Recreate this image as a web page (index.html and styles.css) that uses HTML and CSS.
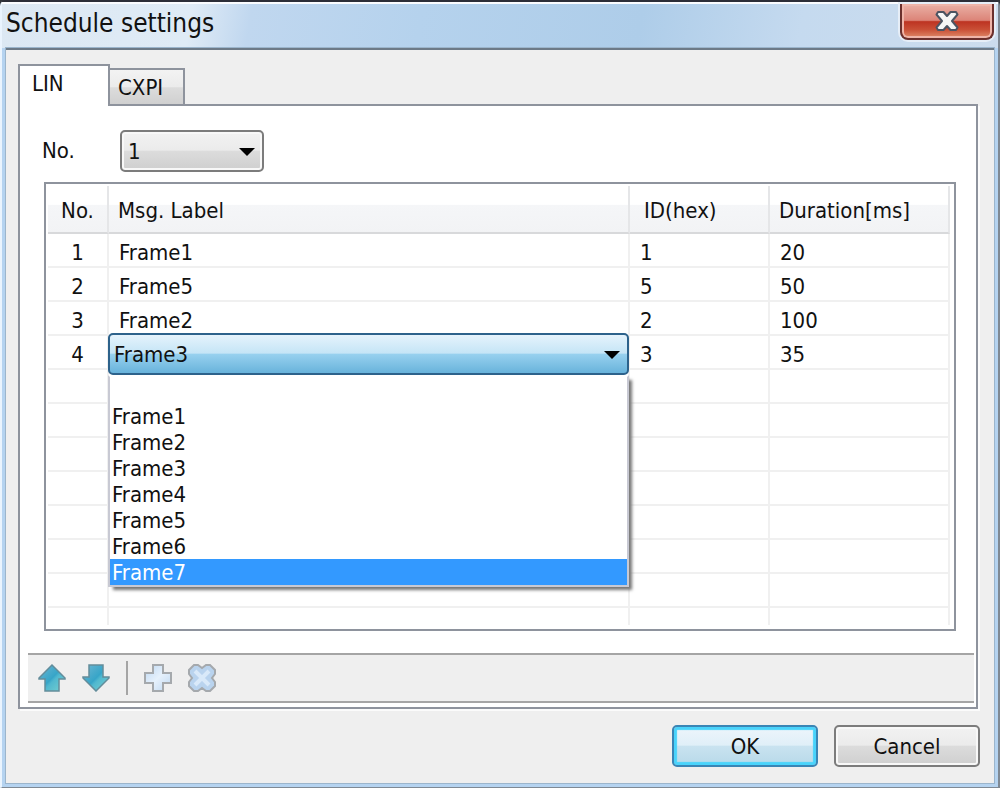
FILE: index.html
```html
<!DOCTYPE html>
<html lang="en">
<head>
<meta charset="utf-8">
<title>Schedule settings</title>
<link rel="stylesheet" href="styles.css">
</head>
<body>
<div class="window">
  <header class="titlebar">
    <h1 class="title">Schedule settings</h1>
    <button class="close" type="button" aria-label="Close">
      <svg width="24" height="22" viewBox="0 0 24 22"><path d="M3 2h5.500L12 6l3.500-4H21l1.500 2.500L17 11l5.500 6.500L21 20h-5.500L12 16l-3.500 4H3l-1.500-2.500L7 11 1.500 4.500z" fill="#f6f6f6" stroke="#4c5462" stroke-width="2" stroke-linejoin="round"/></svg>
    </button>
  </header>
  <main class="client">
    <div class="tabs" role="tablist">
      <button class="tab tab-active" type="button" role="tab" aria-selected="true">LIN</button>
      <button class="tab" type="button" role="tab" aria-selected="false">CXPI</button>
    </div>
    <section class="panel">
      <div class="number-row">
        <label class="number-label" for="schedule-no">No.</label>
        <div class="combo number-combo">
          <select id="schedule-no" class="combo-select"><option>1</option></select>
          <svg class="combo-arrow" width="16" height="10" viewBox="0 0 16 10"><path d="M0 1h16L8 9z" fill="#000"/></svg>
        </div>
      </div>
      <div class="grid">
        <table class="frames">
          <colgroup><col class="col-no"><col><col class="col-id"><col class="col-duration"></colgroup>
          <thead><tr><th class="center">No.</th><th>Msg. Label</th><th class="wide">ID(hex)</th><th>Duration[ms]</th></tr></thead>
          <tbody>
            <tr><td class="center">1</td><td>Frame1</td><td>1</td><td>20</td></tr>
            <tr><td class="center">2</td><td>Frame5</td><td>5</td><td>50</td></tr>
            <tr><td class="center">3</td><td>Frame2</td><td>2</td><td>100</td></tr>
            <tr>
              <td class="center">4</td>
              <td class="editing">
                <div class="editor">
                  <div class="combo">
                    <select class="combo-select combo-open" aria-label="Msg. Label"><option>Frame3</option></select>
                    <svg class="combo-arrow" width="16" height="10" viewBox="0 0 16 10"><path d="M0 1h16L8 9z" fill="#000"/></svg>
                  </div>
                  <select class="dropdown" size="8" aria-label="Frames">
                    <option></option><option>Frame1</option><option>Frame2</option><option>Frame3</option><option>Frame4</option><option>Frame5</option><option>Frame6</option><option selected>Frame7</option>
                  </select>
                </div>
              </td>
              <td>3</td><td>35</td>
            </tr>
            <tr><td></td><td></td><td></td><td></td></tr>
            <tr><td></td><td></td><td></td><td></td></tr>
            <tr><td></td><td></td><td></td><td></td></tr>
            <tr><td></td><td></td><td></td><td></td></tr>
            <tr><td></td><td></td><td></td><td></td></tr>
            <tr><td></td><td></td><td></td><td></td></tr>
            <tr><td></td><td></td><td></td><td></td></tr>
            <tr class="partial"><td></td><td></td><td></td><td></td></tr>
          </tbody>
        </table>
      </div>
      <div class="toolbar" role="toolbar" aria-label="Edit rows">
        <button class="tool" type="button" aria-label="Move up">
          <svg width="28" height="28" viewBox="0 0 28 28"><defs><linearGradient id="teal" x1="0" y1="0" x2="1" y2="1"><stop offset="0" stop-color="#6fb6d2"/><stop offset=".5" stop-color="#37a5c8"/><stop offset=".58" stop-color="#51b8cf"/><stop offset="1" stop-color="#79d2d0"/></linearGradient></defs><path d="M14 1L27 14v1h-6v12H7V15H1v-1z" fill="url(#teal)" stroke="#648d9b" stroke-width="1.500"/></svg>
        </button>
        <button class="tool" type="button" aria-label="Move down">
          <svg width="28" height="28" viewBox="0 0 28 28"><path d="M7 1h14v12h6v1L14 27 1 14v-1h6z" fill="url(#teal)" stroke="#648d9b" stroke-width="1.500"/></svg>
        </button>
        <span class="divider"></span>
        <button class="tool" type="button" aria-label="Add">
          <svg width="28" height="28" viewBox="0 0 28 28"><defs><linearGradient id="pale" x1="0" y1="0" x2="1" y2="1"><stop offset="0" stop-color="#bdd7f1"/><stop offset=".5" stop-color="#e6f1fc"/><stop offset="1" stop-color="#bdd7f1"/></linearGradient></defs><path d="M9 1h10v8h8v10h-8v8H9v-8H1V9h8z" fill="url(#pale)" stroke="#a5a9ad" stroke-width="2"/></svg>
        </button>
        <button class="tool" type="button" aria-label="Delete">
          <svg width="28" height="28" viewBox="0 0 28 28"><path d="M6 1h4l4 3 4-3h4l5 5v4l-3 4 3 4v4l-5 5h-4l-4-3-4 3H6l-5-5v-4l3-4-3-4V6z" fill="#b9d3ee" stroke="#a5a9ad" stroke-width="2"/><path d="M7 7l14 14M21 7L7 21" stroke="#d9e9f9" stroke-width="4"/></svg>
        </button>
      </div>
    </section>
    <footer class="actions">
      <button class="button button-default" type="button">OK</button>
      <button class="button" type="button">Cancel</button>
    </footer>
  </main>
</div>
</body>
</html>
```
FILE: styles.css
```css
* { box-sizing: border-box; }

body {
  margin: 0;
  background: #30343a;
  color: #111;
  font: 22px/26px "DejaVu Sans Condensed", "DejaVu Sans", sans-serif;
}

button, select { color: inherit; font: inherit; }

.window {
  display: flex;
  flex-direction: column;
  min-height: 100vh;
  padding: 0 4px 4px;
  border: 2px solid #7f8994;
  border-top-color: #2c2e38;
  border-left: 2px solid #eaf4fe;
  border-radius: 6px 6px 2px 2px;
  background: #b5d3f0;
}

.titlebar {
  display: flex;
  justify-content: space-between;
  align-items: flex-start;
  height: 46px;
  margin: 0 -4px;
  padding-right: 4px;
  border-top: 2px solid #fafcff;
  background: linear-gradient(100deg, #dce8f3 0, #dfebf6 19%, #c0d7ef 25%, #b5d2ed 42%, #aecde9 64%, #c5daef 80%, #ccdced 100%);
}

.title {
  margin: 0;
  padding: 4px;
  font-size: 26px;
  font-weight: normal;
  line-height: 30px;
}

.close {
  display: grid;
  place-items: center;
  width: 94px;
  height: 36px;
  padding: 0;
  border: 2px solid #6b302d;
  border-top: 0;
  border-radius: 0 0 8px 8px;
  background: linear-gradient(#eab1a6 0, #dc8478 48%, #bd3422 52%, #c94f36 75%, #df8c6b 100%);
  box-shadow: inset 0 0 0 2px #efb5a9, 0 0 0 2px #e6eef7;
}

.client {
  flex: 1;
  padding: 14px 14px 16px 12px;
  border-top: 2px solid #6d7a87;
  background: #efefef;
  box-shadow: 0 0 0 1px #9bb5cc;
}

.tabs { display: flex; align-items: flex-end; }

.tab {
  height: 36px;
  padding: 2px 20px 0 8px;
  border: 2px solid #8e939d;
  border-width: 2px 2px 0 0;
  background: linear-gradient(#f3f3f3 0, #ebebeb 50%, #dcdcdc 52%, #d0d0d0 100%);
  line-height: 32px;
}

.tab-active {
  position: relative;
  width: 92px;
  height: 42px;
  margin-bottom: -2px;
  padding: 0 0 4px 12px;
  border-left-width: 2px;
  background: #fff;
  text-align: left;
}

.panel {
  margin-right: 2px;
  padding: 24px 2px 4px 8px;
  border: 2px solid #8e939d;
  background: #fff;
  box-shadow: 2px 2px 0 #fbfbfb;
}

.number-row { display: flex; align-items: center; padding-left: 14px; }
.number-label { width: 78px; }
.combo { position: relative; }
.number-combo { width: 144px; }

.combo-select {
  display: block;
  width: 100%;
  height: 42px;
  padding: 2px 6px 0;
  border: 2px solid #7c7c7c;
  border-radius: 5px;
  appearance: none;
  background: linear-gradient(#f2f2f2 0, #ebebeb 48%, #dcdcdc 50%, #cfcfcf 100%);
  box-shadow: inset 0 0 0 2px #f8f8f8;
}

.combo-open {
  padding: 2px 4px 0;
  border-color: #2d628b;
  background: linear-gradient(#e5f3fc 0, #c5e5f6 48%, #98d1ef 50%, #68b3db 100%);
  box-shadow: none;
}

.combo-arrow { position: absolute; top: 17px; right: 9px; pointer-events: none; }

.grid {
  margin: 10px 18px 22px 16px;
  padding: 2px 4px 4px 2px;
  border: 2px solid #8e939d;
}

.frames { width: 100%; border-spacing: 0; table-layout: fixed; }
.col-no { width: 61px; }
.col-id { width: 140px; }
.col-duration { width: 180px; }

.frames th {
  height: 48px;
  padding: 4px 9px 0;
  border-right: 2px solid #e5e6e8;
  border-bottom: 2px solid #d8d9db;
  background: linear-gradient(#fff 0, #fff 40%, #f5f6f8 42%, #f2f3f5 100%);
  font-weight: normal;
  text-align: left;
}

.frames td {
  height: 34px;
  padding: 6px 10px 0;
  border-right: 2px solid #f0f0f0;
  border-bottom: 2px solid #f0f0f0;
  line-height: 26px;
}

.frames .center { padding-right: 0; padding-left: 0; text-align: center; }
.frames .wide { padding-left: 14px; }
.frames .editing { position: relative; padding: 0; }
.frames .partial td { height: 17px; padding: 0; border-bottom: 0; }

.editor { position: absolute; z-index: 1; top: -3px; right: -1px; left: -1px; }

.dropdown {
  display: block;
  width: 100%;
  height: 212px;
  padding: 0;
  overflow: hidden;
  border: 2px solid #c8c9d3;
  border-top-color: #fff;
  border-radius: 0;
  appearance: none;
  background: #fff;
  box-shadow: 4px 4px 3px -1px #777;
}

.dropdown option { height: 26px; min-height: 26px; padding: 1px 2px 0; line-height: 26px; }
.dropdown option:checked { background: #3399ff linear-gradient(#3399ff, #3399ff); color: #fff; }

.toolbar {
  display: flex;
  align-items: center;
  gap: 16px;
  height: 50px;
  padding: 0 10px;
  border: 2px solid #a5a5a5;
  border-width: 2px 0;
  background: #efefef;
}

.tool { width: 28px; height: 28px; padding: 0; border: 0; background: none; }
.tool svg { display: block; }
.divider { width: 2px; height: 34px; background: #a5a5a5; }

.actions { display: flex; justify-content: flex-end; gap: 16px; margin-top: 16px; }

.button {
  width: 146px;
  height: 42px;
  padding: 2px 0 0;
  border: 2px solid #7c7c7c;
  border-radius: 5px;
  background: linear-gradient(#f2f2f2 0, #ebebeb 48%, #dcdcdc 50%, #cfcfcf 100%);
  box-shadow: inset 0 0 0 2px #f8f8f8;
}

.button-default {
  border-color: #3a85b5;
  background: linear-gradient(#edf5fb 0, #e0eff8 48%, #c9e3f0 50%, #b8d9e9 100%);
  box-shadow: inset 0 0 1px 3px #49d3fb;
}
```
